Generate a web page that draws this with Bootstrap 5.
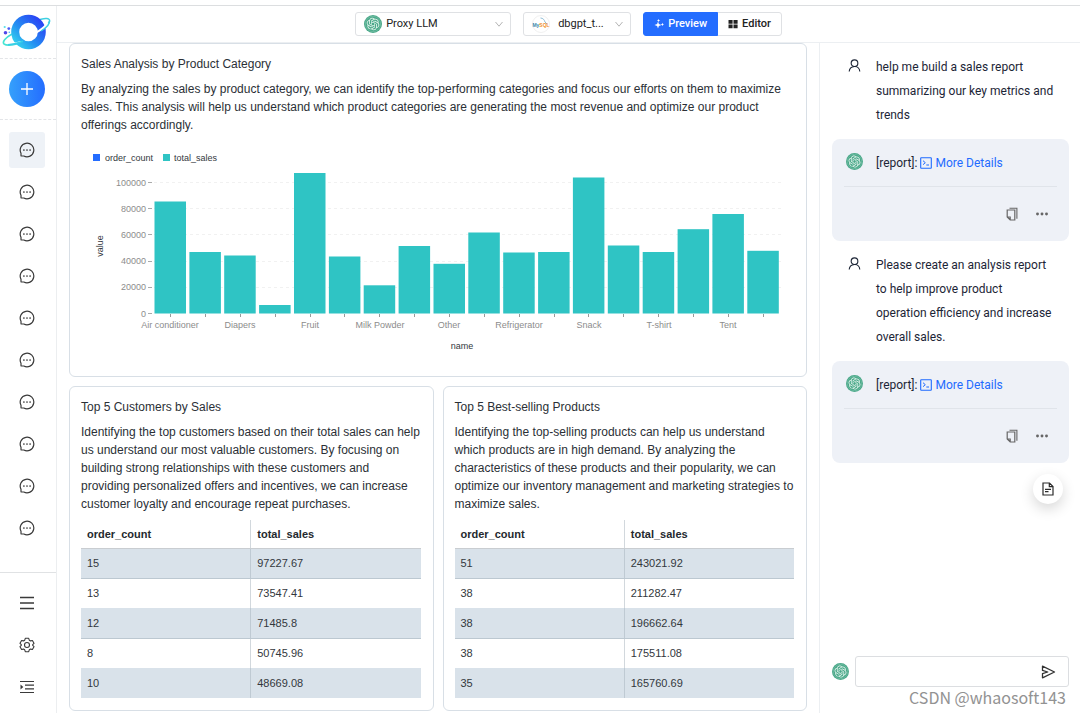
<!DOCTYPE html>
<html lang="en">
<head>
<meta charset="utf-8">
<meta name="viewport" content="width=device-width, initial-scale=1">
<title>Sales report</title>
<link href="https://cdn.jsdelivr.net/npm/bootstrap@5.3.0/dist/css/bootstrap.min.css" rel="stylesheet">
<style>
  :root { --ink: #1c2536; --blue: #246dff; --line: #e3e5e8; }
  body { font-family: Roboto, "Liberation Sans", sans-serif; font-size: 12px; color: var(--ink); background: #fff; }
  .page { padding-top: 5px; }
  .app { border-top: 1px solid #dcdee0; }
  .fill { flex: 1 1 0; min-width: 0; min-height: 0; }
  svg { display: block; flex: none; }

  /* left rail */
  .rail { width: 57px; border-right: 1px solid #eceef0; color: #3a3a3a; }
  .rail-block { border-bottom: 1px dashed var(--line); }
  .rail-col { gap: 6px; padding-right: 2px; }
  .rail-btn { width: 36px; height: 36px; border: 0; border-radius: 3px; background: transparent; color: inherit; padding: 0; }
  .rail-btn.active { background: #eef2f7; }
  .rail-add { border-radius: 50%; background: linear-gradient(90deg, #35a0fb, #246dff); color: #fff; }
  .rail-foot { border-top: 1px solid #e0e2e4; }

  /* top bar */
  .topbar { height: 37px; border-bottom: 1px solid #eceff2; }
  .picker { height: 24px; border: 1px solid #dfe1e4; border-radius: 3px; padding-left: 8px; }
  .picker select { border: 0; padding: 0 22px 0 0; height: 22px; font-size: 11px; line-height: 22px; color: #222;
    background: url("data:image/svg+xml,%3Csvg xmlns='http://www.w3.org/2000/svg' viewBox='0 0 10 10'%3E%3Cpath d='M1.5 3 5 7.200 8.500 3' fill='none' stroke='%23b5b5b5'/%3E%3C/svg%3E") no-repeat right 6px center / 10px 10px; }
  .picker-model { width: 156px; }
  .picker-db { width: 108px; }
  .picker-row { gap: 12px; }
  .mode .btn { height: 24px; font-size: 11px; line-height: 22px; padding: 0 10px; border-color: #dfe1e4; color: #222; border-radius: 3px; font-weight: 500; gap: 4px; }
  .mode .btn.active { background: var(--blue); border-color: var(--blue); color: #fff; }

  /* report */
  .report { font-family: "Liberation Sans", Arial, sans-serif; color: #2b3036; padding: 0 12px; }
  .panel { border: 1px solid #d8dfe6; border-radius: 6px; padding: 11px 12px 12px 11px; background: #fff; }
  .panel h2 { font-size: 12px; line-height: 18px; font-weight: 400; margin: 0 0 7px; }
  .panel p { line-height: 18px; margin: 0 0 7px; }
  .panel-gap { gap: 9px; }
  .chart { width: 100%; height: auto; font-size: 9px; }
  .data { font-size: 11px; table-layout: fixed; --bs-table-color: #33383d; color: #33383d; }
  .data th, .data td { height: 30px; padding: 0 6px; vertical-align: middle; border: 0; box-shadow: none; }
  .data th { height: 28px; color: #24292e; border-bottom: 1px solid #c9cdd1; }
  .data tr > :first-child { border-right: 1px solid #d2d8dd; }
  .data tbody tr:nth-child(odd) > td { background: #d9e2ea; border-bottom: 1px solid #bcc8d1; }
  .data tbody tr:nth-child(odd) > td:first-child { border-right-color: #bfcad3; }
  .data tbody tr:last-child > td { border-bottom: 0; }

  /* chat */
  .chat { width: 261px; border-left: 1px solid #eceff2; padding: 0 11px 0 12px; }
  .msg { padding: 12px; line-height: 24px; gap: 12px; }
  .ask { padding-right: 14px; }
  .who { width: 20px; height: 20px; }
  .reply { background: #eef1f7; border-radius: 8px; }
  .reply-main { padding-bottom: 11px; gap: 12px; }
  .reply-tools { border-top: 1px solid #e0e4ea; padding: 15px 8px 3px 0; gap: 15px; color: #666; }
  .reply a { color: #1f6bff; gap: 3px; }
  .tool { border: 0; background: transparent; padding: 0; height: 24px; min-width: 14px; color: inherit; }
  .float-doc { width: 30px; height: 30px; border: 0; border-radius: 50%; background: #fff; padding: 0; color: #2a2a2a; box-shadow: 0 5px 14px rgba(0,0,0,.16); margin: 11px 6px 0 0; }
  .composer { gap: 6px; padding-bottom: 26px; }
  .entry { height: 31px; border: 1px solid #dcdee1; border-radius: 3px; padding-right: 13px; }
  .entry input { border: 0; background: transparent; box-shadow: none; font-size: 12px; padding: 0 8px; height: 29px; }
  .credit { right: 14px; bottom: 4px; font: 16px/24px "Noto Sans CJK SC", sans-serif; color: #929292; text-shadow: 1px 1px 0 #fff; }
</style>
</head>
<body>
<svg width="0" height="0" class="position-absolute" aria-hidden="true">
  <defs>
    <linearGradient id="ringFill" x1="0" y1="1" x2="1" y2="0"><stop offset="0" stop-color="#35d5ee"/><stop offset=".4" stop-color="#2490f2"/><stop offset="1" stop-color="#2b3cf5"/></linearGradient>
    <linearGradient id="orbitFill" x1="0" y1="0" x2="1" y2="0"><stop offset="0" stop-color="#45e6d2"/><stop offset="1" stop-color="#3fc4e8"/></linearGradient>
    <symbol id="i-chat" viewBox="0 0 16 16"><path d="M2 11.200V13.400Q2 14 2.600 14H4.800A6.800 6.800 0 1 0 2 11.200Z" fill="none" stroke="currentColor" stroke-width="1.200" stroke-linejoin="round"/><circle cx="4.900" cy="8" r=".85" fill="currentColor"/><circle cx="8" cy="8" r=".85" fill="currentColor"/><circle cx="11.100" cy="8" r=".85" fill="currentColor"/></symbol>
    <symbol id="i-gpt" viewBox="0 0 40 40"><circle cx="20" cy="20" r="20" fill="#4aa889"/><circle cx="20" cy="20" r="17" fill="none" stroke="#8fcdb8" stroke-width="1"/><path transform="translate(6 6) scale(1.170)" fill="#e9f7f1" d="M22.2819 9.8211a5.9847 5.9847 0 0 0-.5157-4.9108 6.0462 6.0462 0 0 0-6.5098-2.9A6.0651 6.0651 0 0 0 4.9807 4.1818a5.9847 5.9847 0 0 0-3.9977 2.9 6.0462 6.0462 0 0 0 .7427 7.0966 5.98 5.98 0 0 0 .511 4.9107 6.051 6.051 0 0 0 6.5146 2.9001A5.9847 5.9847 0 0 0 13.2599 24a6.0557 6.0557 0 0 0 5.7718-4.2058 5.9894 5.9894 0 0 0 3.9977-2.9001 6.0557 6.0557 0 0 0-.7475-7.0729zm-9.022 12.6081a4.4755 4.4755 0 0 1-2.8764-1.0408l.1419-.0804 4.7783-2.7582a.7948.7948 0 0 0 .3927-.6813v-6.7369l2.02 1.1686a.071.071 0 0 1 .038.052v5.5826a4.504 4.504 0 0 1-4.4945 4.4944zm-9.6607-4.1254a4.4708 4.4708 0 0 1-.5346-3.0137l.142.0852 4.783 2.7582a.7712.7712 0 0 0 .7806 0l5.8428-3.3685v2.3324a.0804.0804 0 0 1-.0332.0615L9.74 19.9502a4.4992 4.4992 0 0 1-6.1408-1.6464zM2.3408 7.8956a4.485 4.485 0 0 1 2.3655-1.9728V11.6a.7664.7664 0 0 0 .3879.6765l5.8144 3.3543-2.0201 1.1685a.0757.0757 0 0 1-.071 0l-4.8303-2.7865A4.504 4.504 0 0 1 2.3408 7.872zm16.5963 3.8558L13.1038 8.364 15.1192 7.2a.0757.0757 0 0 1 .071 0l4.8303 2.7913a4.4944 4.4944 0 0 1-.6765 8.1042v-5.6772a.79.79 0 0 0-.407-.667zm2.0107-3.0231l-.142-.0852-4.7735-2.7818a.7759.7759 0 0 0-.7854 0L9.409 9.2297V6.8974a.0662.0662 0 0 1 .0284-.0615l4.8303-2.7866a4.4992 4.4992 0 0 1 6.6802 4.66zM8.3065 12.863l-2.02-1.1638a.0804.0804 0 0 1-.038-.0567V6.0742a4.4992 4.4992 0 0 1 7.3757-3.4537l-.142.0805L8.704 5.459a.7948.7948 0 0 0-.3927.6813zm1.0976-2.3654l2.602-1.4998 2.6069 1.4998v2.9994l-2.5974 1.4997-2.6067-1.4997Z"/></symbol>
    <symbol id="i-user" viewBox="0 0 14 14"><circle cx="7" cy="4.500" r="3.600" fill="none" stroke="currentColor" stroke-width="1.200"/><path d="M1.300 13.500C1.500 10.500 3.600 8.300 7 8.100S12.500 10.500 12.700 13.500" fill="none" stroke="currentColor" stroke-width="1.200"/></symbol>
    <symbol id="i-console" viewBox="0 0 12 12"><rect x=".7" y=".7" width="10.600" height="10.600" rx=".5" fill="none" stroke="currentColor" stroke-width="1.100"/><path d="M3 3.700 5.300 5.700 3 7.700M6.300 8H9" fill="none" stroke="currentColor"/></symbol>
    <symbol id="i-copy" viewBox="0 0 12 14"><path d="M3.500 1.200H10.900V11.800" fill="none" stroke="currentColor" stroke-width="1.100"/><path d="M1.200 3H8.800V13H4.200L1.200 10Z M1.200 10H4.200V13" fill="none" stroke="currentColor" stroke-width="1.200"/></symbol>
    <symbol id="i-more" viewBox="0 0 14 14"><circle cx="2.500" cy="7" r="1.450" fill="currentColor"/><circle cx="7" cy="7" r="1.450" fill="currentColor"/><circle cx="11.500" cy="7" r="1.450" fill="currentColor"/></symbol>
  </defs>
</svg>

<div class="page vh-100 overflow-hidden d-flex">
<div class="app fill d-flex">

  <nav class="rail d-flex flex-column flex-shrink-0" aria-label="Conversations">
    <div class="rail-block">
      <a href="#" class="d-block" aria-label="Home">
        <svg width="56" height="52" viewBox="0 6 56 52">
          <path d="M12 34C5 38 2 42 4 44C7 46 15 45 24 41" fill="none" stroke="url(#orbitFill)" stroke-width="1.600"/>
          <path d="M38 20C45 17.500 50 18 49.600 21C49 24 45 27 40 30.500" fill="none" stroke="#3fd0e2" stroke-width="1.500"/>
          <circle cx="28.500" cy="32" r="13.300" fill="none" stroke="url(#ringFill)" stroke-width="8"/>
          <path d="M10 43.500C14 43.500 18 42.500 21 41.500" fill="none" stroke="#fff" stroke-width="1.200"/>
          <path d="M8 44.700C14 44 19 42.800 23 41.200" fill="none" stroke="#36cfe8" stroke-width="1.500"/>
          <path d="M36 32.500C41 30 45 27 47.500 23" fill="none" stroke="#fff" stroke-width="2.200"/>
          <path d="M41 31C46 28 50 24 49.500 20.800" fill="none" stroke="#3fd0e2" stroke-width="1.400"/>
          <circle cx="4.700" cy="27" r="1.100" fill="#58e1ea"/><circle cx="8.800" cy="28.600" r="1.400" fill="#4a5df5"/><circle cx="5.500" cy="32.700" r="1.800" fill="#5147e8"/><circle cx="9.300" cy="32.300" r=".8" fill="#46b4f5"/>
        </svg>
      </a>
    </div>
    <div class="rail-block rail-col d-flex justify-content-center py-2">
      <button class="rail-btn rail-add my-1 d-flex align-items-center justify-content-center" aria-label="New chat">
        <svg width="14" height="14" viewBox="0 0 14 14"><path d="M7 1V13M1 7H13" stroke="currentColor" stroke-width="1.300"/></svg>
      </button>
    </div>
    <div class="rail-col d-flex flex-column align-items-center pt-2 mt-1">
      <button class="rail-btn active d-flex align-items-center justify-content-center" aria-label="Chat 1"><svg width="16" height="16"><use href="#i-chat"/></svg></button>
      <button class="rail-btn d-flex align-items-center justify-content-center" aria-label="Chat 2"><svg width="16" height="16"><use href="#i-chat"/></svg></button>
      <button class="rail-btn d-flex align-items-center justify-content-center" aria-label="Chat 3"><svg width="16" height="16"><use href="#i-chat"/></svg></button>
      <button class="rail-btn d-flex align-items-center justify-content-center" aria-label="Chat 4"><svg width="16" height="16"><use href="#i-chat"/></svg></button>
      <button class="rail-btn d-flex align-items-center justify-content-center" aria-label="Chat 5"><svg width="16" height="16"><use href="#i-chat"/></svg></button>
      <button class="rail-btn d-flex align-items-center justify-content-center" aria-label="Chat 6"><svg width="16" height="16"><use href="#i-chat"/></svg></button>
      <button class="rail-btn d-flex align-items-center justify-content-center" aria-label="Chat 7"><svg width="16" height="16"><use href="#i-chat"/></svg></button>
      <button class="rail-btn d-flex align-items-center justify-content-center" aria-label="Chat 8"><svg width="16" height="16"><use href="#i-chat"/></svg></button>
      <button class="rail-btn d-flex align-items-center justify-content-center" aria-label="Chat 9"><svg width="16" height="16"><use href="#i-chat"/></svg></button>
      <button class="rail-btn d-flex align-items-center justify-content-center" aria-label="Chat 10"><svg width="16" height="16"><use href="#i-chat"/></svg></button>
    </div>
    <div class="rail-foot rail-col mt-auto d-flex flex-column align-items-center pt-2 pb-2">
      <button class="rail-btn mt-1 d-flex align-items-center justify-content-center" aria-label="Menu"><svg width="14" height="14" viewBox="0 0 14 14"><path d="M0 1.500H14M0 7H14M0 12.500H14" stroke="currentColor" stroke-width="1.300"/></svg></button>
      <button class="rail-btn d-flex align-items-center justify-content-center" aria-label="Settings"><svg width="16" height="16" viewBox="0 0 16 16"><path d="M6.300 1.300H9.700L10.300 3.200 11.500 3.900 13.400 3.500 15 6.300 13.700 7.700V8.300L15 9.700 13.400 12.500 11.500 12.100 10.300 12.800 9.700 14.700H6.300L5.700 12.800 4.500 12.100 2.600 12.500 1 9.700 2.300 8.300V7.700L1 6.300 2.600 3.500 4.500 3.900 5.700 3.200Z" fill="none" stroke="currentColor" stroke-width="1.100" stroke-linejoin="round"/><circle cx="8" cy="8" r="2.500" fill="none" stroke="currentColor" stroke-width="1.100"/></svg></button>
      <button class="rail-btn d-flex align-items-center justify-content-center" aria-label="Expand sidebar"><svg width="14" height="14" viewBox="0 0 14 14"><path d="M0 1.500H14M5 5.200H14M5 8.800H14M0 12.500H14" stroke="currentColor" stroke-width="1.200"/><path d="M.5 4.500V9.500L3.300 7Z" fill="currentColor"/></svg></button>
    </div>
  </nav>

  <div class="fill d-flex flex-column">
    <header class="topbar picker-row d-flex align-items-center justify-content-center flex-shrink-0">
      <label class="picker picker-model d-flex align-items-center">
        <svg width="18" height="18"><use href="#i-gpt"/></svg>
        <select class="form-select ms-1" aria-label="Model"><option>Proxy LLM</option></select>
      </label>
      <label class="picker picker-db d-flex align-items-center">
        <svg width="18" height="18" viewBox="0 0 18 18"><circle cx="9" cy="9" r="8.500" fill="#fff" stroke="#e6e6e6" stroke-width=".6"/><path d="M8.500 3C11 3 12.500 5 13 7L15 9" fill="none" stroke="#8fbdd6"/><text x="9" y="12" text-anchor="middle" font-size="5" font-weight="700" font-family="Liberation Sans, sans-serif" fill="#3d86ac">My<tspan fill="#f0912f">SQL</tspan></text></svg>
        <select class="form-select ms-2" aria-label="Database"><option>dbgpt_t...</option></select>
      </label>
      <div class="btn-group mode" role="group" aria-label="View mode">
        <button type="button" class="btn active d-flex align-items-center"><svg width="10" height="10" viewBox="0 0 10 10"><path d="M4 2.500 4.900 5.100 7.500 6 4.900 6.900 4 9.500 3.100 6.900.5 6 3.100 5.100ZM4.500 0 5 1 6 1.500 5 2 4.500 3 4 2 3 1.500 4 1ZM8.400 3.800 8.900 4.900 10 5.400 8.900 5.900 8.400 7 7.900 5.900 6.800 5.400 7.900 4.900Z" fill="currentColor"/></svg>Preview</button>
        <button type="button" class="btn d-flex align-items-center"><svg width="10" height="10" viewBox="0 0 10 10"><path d="M.5 1H4.600V4.700H.5ZM5.500 1H9.600V4.700H5.500ZM.5 5.500H4.600V9.200H.5ZM5.500 5.500H9.600V9.200H5.500Z" fill="currentColor"/></svg>Editor</button>
      </div>
    </header>

    <div class="fill d-flex">
      <main class="report fill overflow-hidden d-flex flex-column panel-gap">
        <section class="panel">
          <h2>Sales Analysis by Product Category</h2>
          <p>By analyzing the sales by product category, we can identify the top-performing categories and focus our efforts on them to maximize sales. This analysis will help us understand which product categories are generating the most revenue and optimize our product offerings accordingly.</p>
          <svg class="chart" viewBox="0 0 713 223" role="img" aria-label="Total sales by product category">
            <rect x="12" y="13" width="7" height="7" fill="#246dff"/><text x="24" y="20" fill="#33383d">order_count</text>
            <rect x="82" y="13" width="7" height="7" fill="#2fc4c4"/><text x="93" y="20" fill="#33383d">total_sales</text>
            <g transform="translate(0 1)">
            <path d="M73 40.500H701M73 66.500H701M73 92.500H701M73 119.500H701M73 145.500H701" stroke="#f1f1f1" stroke-dasharray="3 3"/>
            <path d="M67 40.500H71M67 66.500H71M67 92.500H71M67 119.500H71M67 145.500H71M67 171.500H71" stroke="#aaa"/>
            <g fill="#8c8c8c" text-anchor="end"><text x="65" y="44">100000</text><text x="65" y="70">80000</text><text x="65" y="96">60000</text><text x="65" y="122">40000</text><text x="65" y="148">20000</text><text x="65" y="175">0</text></g>
            <path d="M89.500 172v3m35-3v3m35-3v3m35-3v3m35-3v3m34-3v3m35-3v3m35-3v3m35-3v3m35-3v3m35-3v3m35-3v3m34-3v3m35-3v3m35-3v3m35-3v3m35-3v3m35-3v3" stroke="#999" fill="none"/>
            <g fill="#2fc4c4">
              <rect x="73.500" y="59.500" width="31.500" height="112"/><rect x="108.400" y="110" width="31.500" height="61.500"/><rect x="143.200" y="113.500" width="31.500" height="58"/><rect x="178.100" y="163" width="31.500" height="8.500"/><rect x="213" y="31" width="31.500" height="140.500"/><rect x="247.900" y="114.500" width="31.500" height="57"/><rect x="282.700" y="143.300" width="31.500" height="28.200"/><rect x="317.600" y="104" width="31.500" height="67.500"/><rect x="352.500" y="121.800" width="31.500" height="49.700"/><rect x="387.300" y="90.500" width="31.500" height="81"/><rect x="422.200" y="110.500" width="31.500" height="61"/><rect x="457.100" y="110" width="31.500" height="61.500"/><rect x="491.900" y="35.500" width="31.500" height="136"/><rect x="526.800" y="103.500" width="31.500" height="68"/><rect x="561.700" y="110" width="31.500" height="61.500"/><rect x="596.600" y="87.200" width="31.500" height="84.300"/><rect x="631.400" y="72" width="31.500" height="99.500"/><rect x="666.300" y="108.800" width="31.500" height="62.700"/>
            </g>
            <g fill="#8c8c8c" text-anchor="middle"><text x="89" y="186">Air conditioner</text><text x="159" y="186">Diapers</text><text x="229" y="186">Fruit</text><text x="299" y="186">Milk Powder</text><text x="368" y="186">Other</text><text x="438" y="186">Refrigerator</text><text x="508" y="186">Snack</text><text x="578" y="186">T-shirt</text><text x="647" y="186">Tent</text></g>
            <text x="381" y="207" text-anchor="middle" fill="#33383d">name</text>
            <text transform="translate(22 104) rotate(-90)" text-anchor="middle" fill="#33383d">value</text>
            </g>
          </svg>
        </section>

        <div class="d-flex panel-gap">
          <section class="panel fill">
            <h2>Top 5 Customers by Sales</h2>
            <p>Identifying the top customers based on their total sales can help us understand our most valuable customers. By focusing on building strong relationships with these customers and providing personalized offers and incentives, we can increase customer loyalty and encourage repeat purchases.</p>
            <table class="table data mb-0">
              <thead><tr><th scope="col">order_count</th><th scope="col">total_sales</th></tr></thead>
              <tbody>
                <tr><td>15</td><td>97227.67</td></tr>
                <tr><td>13</td><td>73547.41</td></tr>
                <tr><td>12</td><td>71485.8</td></tr>
                <tr><td>8</td><td>50745.96</td></tr>
                <tr><td>10</td><td>48669.08</td></tr>
              </tbody>
            </table>
          </section>
          <section class="panel fill">
            <h2>Top 5 Best-selling Products</h2>
            <p>Identifying the top-selling products can help us understand which products are in high demand. By analyzing the characteristics of these products and their popularity, we can optimize our inventory management and marketing strategies to maximize sales.</p>
            <table class="table data mb-0">
              <thead><tr><th scope="col">order_count</th><th scope="col">total_sales</th></tr></thead>
              <tbody>
                <tr><td>51</td><td>243021.92</td></tr>
                <tr><td>38</td><td>211282.47</td></tr>
                <tr><td>38</td><td>196662.64</td></tr>
                <tr><td>38</td><td>175511.08</td></tr>
                <tr><td>35</td><td>165760.69</td></tr>
              </tbody>
            </table>
          </section>
        </div>
      </main>

      <aside class="chat d-flex flex-column flex-shrink-0 position-relative" aria-label="Chat">
        <div class="msg ask d-flex">
          <span class="who d-flex align-items-center justify-content-center flex-shrink-0"><svg width="13" height="13"><use href="#i-user"/></svg></span>
          <div>help me build a sales report summarizing our key metrics and trends</div>
        </div>
        <div class="msg reply">
          <div class="reply-main d-flex">
            <span class="who d-flex align-items-center justify-content-center flex-shrink-0"><svg width="17" height="17"><use href="#i-gpt"/></svg></span>
            <div class="d-flex">[report]:&nbsp;<a href="#" class="d-flex align-items-center text-decoration-none"><svg width="12" height="12"><use href="#i-console"/></svg>More Details</a></div>
          </div>
          <div class="reply-tools d-flex justify-content-end">
            <button class="tool d-flex align-items-center" aria-label="Copy"><svg width="12" height="14"><use href="#i-copy"/></svg></button>
            <button class="tool d-flex align-items-center" aria-label="More"><svg width="14" height="14"><use href="#i-more"/></svg></button>
          </div>
        </div>
        <div class="msg ask d-flex">
          <span class="who d-flex align-items-center justify-content-center flex-shrink-0"><svg width="13" height="13"><use href="#i-user"/></svg></span>
          <div>Please create an analysis report to help improve product operation efficiency and increase overall sales.</div>
        </div>
        <div class="msg reply">
          <div class="reply-main d-flex">
            <span class="who d-flex align-items-center justify-content-center flex-shrink-0"><svg width="17" height="17"><use href="#i-gpt"/></svg></span>
            <div class="d-flex">[report]:&nbsp;<a href="#" class="d-flex align-items-center text-decoration-none"><svg width="12" height="12"><use href="#i-console"/></svg>More Details</a></div>
          </div>
          <div class="reply-tools d-flex justify-content-end">
            <button class="tool d-flex align-items-center" aria-label="Copy"><svg width="12" height="14"><use href="#i-copy"/></svg></button>
            <button class="tool d-flex align-items-center" aria-label="More"><svg width="14" height="14"><use href="#i-more"/></svg></button>
          </div>
        </div>
        <button class="float-doc align-self-end d-flex align-items-center justify-content-center" aria-label="Report document"><svg width="12" height="14" viewBox="0 0 12 14"><path d="M1 1H7.500L11 4.500V13H1ZM7.300 1V4.700H11M3 7.300H9M3 9.700H6.500" fill="none" stroke="currentColor" stroke-width="1.200"/></svg></button>
        <form class="composer d-flex align-items-center mt-auto">
          <svg width="17" height="17"><use href="#i-gpt"/></svg>
          <div class="entry d-flex align-items-center flex-grow-1">
            <input type="text" class="form-control" aria-label="Message">
            <button type="button" class="tool d-flex align-items-center" aria-label="Send"><svg width="15" height="14" viewBox="0 0 15 14"><path d="M1.500 1.200 13.500 7 1.500 12.800V8.600L6.800 7 1.500 5.400Z" fill="none" stroke="#333" stroke-width="1.300" stroke-linejoin="round"/></svg></button>
          </div>
        </form>
        <div class="credit position-absolute text-nowrap">CSDN @whaosoft143</div>
      </aside>
    </div>
  </div>
</div>
</div>
<script src="https://cdn.jsdelivr.net/npm/bootstrap@5.3.0/dist/js/bootstrap.bundle.min.js"></script>
</body>
</html>
